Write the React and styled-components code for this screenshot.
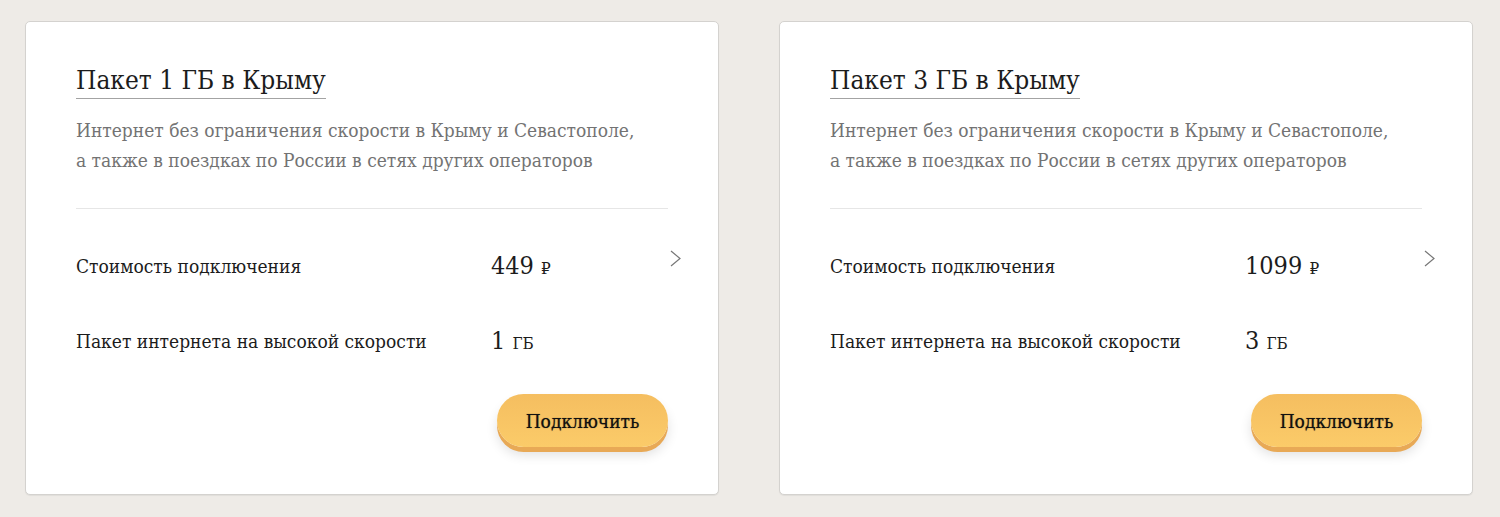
import styled, { createGlobalStyle } from "styled-components";

const GlobalStyle = createGlobalStyle`
    body {
        margin: 0;
        background: #eeebe7;
        font-family: "DejaVu Serif Condensed", "DejaVu Serif", serif;
        color: #1c1c1c;
    }
`;

const packages = [
    { id: 1, size: 1, price: 449 },
    { id: 2, size: 3, price: 1099 },
];

const App = () => {
    return (
        <>
            <GlobalStyle />
            <Page>
                {packages.map((item) => (
                    <Card key={item.id}>
                        <Title>Пакет {item.size} ГБ в Крыму</Title>
                        <Description>
                            Интернет без ограничения скорости в Крыму и Севастополе,
                            <br />а также в поездках по России в сетях других операторов
                        </Description>
                        <Divider />
                        <Params>
                            <Label>Стоимость подключения</Label>
                            <Value>
                                {item.price} <Unit>₽</Unit>
                            </Value>
                            <Label>Пакет интернета на высокой скорости</Label>
                            <Value>
                                {item.size} <Unit>ГБ</Unit>
                            </Value>
                        </Params>
                        <Chevron viewBox="0 0 11 17" aria-hidden="true">
                            <path d="M1 1l9 7.5L1 16" />
                        </Chevron>
                        <Actions>
                            <ConnectButton>Подключить</ConnectButton>
                        </Actions>
                    </Card>
                ))}
            </Page>
        </>
    );
};

export default App;

const Page = styled.div`
    display: flex;
    gap: 60px;
    padding: 21px 27px 21px 25px;
`;

const Card = styled.div`
    position: relative;
    flex: 1;
    display: flex;
    flex-direction: column;
    height: 474px;
    box-sizing: border-box;
    padding: 42px 50px 0;
    background: #fff;
    border: 1px solid #d4d2cf;
    border-radius: 5px;
    box-shadow: 0 1px 1px rgba(0, 0, 0, 0.06);
`;

const Title = styled.div`
    align-self: flex-start;
    font-size: 26px;
    line-height: 32px;
    padding-bottom: 2px;
    border-bottom: 1px solid #a3a3a3;
`;

const Description = styled.p`
    margin: 16px 0 0;
    color: #737373;
    font-size: 19px;
    line-height: 30px;
`;

const Divider = styled.hr`
    margin: 33px 0 0;
    border: 0;
    border-top: 1px solid #e6e6e6;
`;

const Params = styled.div`
    display: grid;
    grid-template-columns: 415px 1fr;
    grid-auto-rows: 75px;
    align-items: center;
    margin-top: 19px;
`;

const Label = styled.div`
    font-size: 19px;
`;

const Value = styled.div`
    font-size: 25px;
`;

const Unit = styled.span`
    font-size: 17px;
`;

const Chevron = styled.svg`
    position: absolute;
    right: 37px;
    top: 228px;
    width: 11px;
    height: 17px;
    fill: none;
    stroke: #777;
    stroke-width: 1.2;
`;

const Actions = styled.div`
    display: flex;
    justify-content: flex-end;
    margin-top: 16px;
`;

const ConnectButton = styled.button`
    width: 171px;
    height: 53px;
    border: 0;
    border-radius: 27px;
    background: linear-gradient(#f5be60, #fbcb69);
    box-shadow: 0 5px 0 #e8a956, 0 8px 12px rgba(0, 0, 0, 0.12);
    font-family: inherit;
    font-size: 19px;
    color: #111;
    text-shadow: 0 0 1px rgba(0, 0, 0, 0.6);
    cursor: pointer;
`;
